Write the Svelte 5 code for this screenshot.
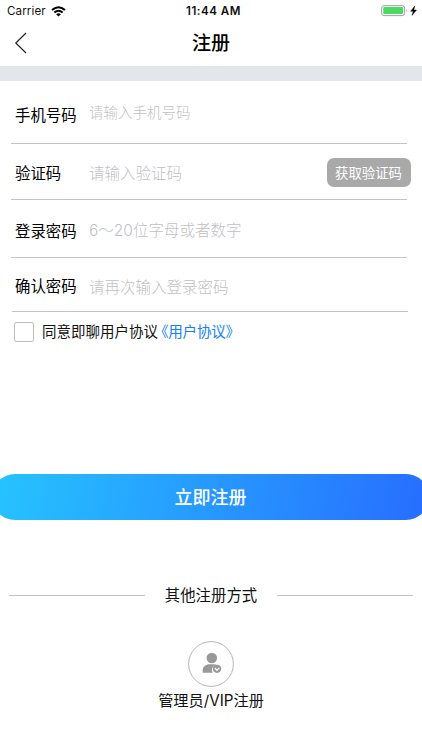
<script>
  const fields = [
    { id: "phone", label: "手机号码", placeholder: "请输入手机号码", type: "tel" },
    { id: "code", label: "验证码", placeholder: "请输入验证码", type: "text" },
    { id: "password", label: "登录密码", placeholder: "6～20位字母或者数字", type: "password" },
    { id: "confirm", label: "确认密码", placeholder: "请再次输入登录密码", type: "password" }
  ];

  let agreed = false;
</script>

<style>
  :global(body) {
    background-color: #fff;
    overflow: hidden;
  }

  .page {
    width: 422px;
    height: 750px;
    overflow: hidden;
    box-sizing: border-box;
    font-family: Inter, "Noto Sans CJK SC", sans-serif;
    color: #111;
  }

  .page * {
    box-sizing: border-box;
  }

  button,
  input {
    font-family: inherit;
    border: 0;
    padding: 0;
    margin: 0;
    background-color: transparent;
  }

  svg {
    display: block;
  }

  .status {
    display: grid;
    grid-template-columns: 1fr auto 1fr;
    align-items: center;
    height: 22px;
    padding: 0 4px 0 7px;
    font-size: 11.6px;
    line-height: 22px;
  }

  .carrier {
    display: flex;
    align-items: center;
    gap: 5px;
    letter-spacing: 0.1px;
  }

  .time {
    font-size: 11.6px;
    font-weight: 600;
    letter-spacing: 0.5px;
    padding-left: 2px;
  }

  .battery {
    justify-self: end;
  }

  .nav {
    display: grid;
    grid-template-columns: 40px 1fr 40px;
    align-items: center;
    height: 44px;
  }

  .back {
    padding: 0 0 2px 14px;
  }

  h1 {
    margin: 0;
    text-align: center;
    font-size: 19px;
    line-height: 40px;
    font-weight: 500;
    color: #000;
  }

  .band {
    height: 15px;
    background-color: #e3e6eb;
  }

  .row {
    display: flex;
    align-items: center;
    margin: 0 15px 0 11px;
    padding-left: 4px;
    border-bottom: 1px solid #c4c4c6;
  }

  .row label {
    width: 74px;
    padding-top: 1px;
    font-size: 15.4px;
    line-height: 22px;
    color: #000;
  }

  .row input {
    flex: 1;
    min-width: 0;
    height: 24px;
    font-size: 15.5px;
    outline: none;
  }

  .row input::placeholder {
    color: #bfbfc5;
    opacity: 1;
    font-weight: 300;
  }

  .phone {
    height: 63px;
    padding-top: 6px;
  }

  .phone input {
    font-size: 14.5px;
    margin-bottom: 5px;
  }

  .code {
    height: 56px;
    padding-top: 3px;
  }

  .password {
    height: 58px;
    padding-top: 5px;
  }

  .password input {
    margin-bottom: 2px;
  }

  .confirm {
    height: 54px;
    margin: 0 14px 0 12px;
    padding-left: 3px;
    padding-top: 3px;
  }

  .confirm input {
    margin-top: 2px;
  }

  .get-code {
    width: 84px;
    height: 29px;
    margin: 0 -4px 1px 0;
    border-radius: 7px;
    background-color: #a9a9a9;
    color: #fff;
    font-size: 13.4px;
    line-height: 28px;
    padding-right: 1px;
  }

  .agree {
    display: flex;
    align-items: center;
    height: 40px;
    padding-left: 14px;
    font-size: 14.5px;
    line-height: 22px;
  }

  .agree input {
    appearance: none;
    width: 20px;
    height: 20px;
    margin-right: 8px;
    border: 1px solid #bdbdbd;
    border-radius: 2px;
  }

  .agree input:checked {
    background-color: #2a7fff;
  }

  .link {
    color: #1481f5;
    font-size: 14.6px;
    letter-spacing: -0.3px;
    margin-left: -4px;
  }

  .submit {
    display: block;
    width: 437px;
    height: 46px;
    margin: 122px 0 0 -8px;
    border-radius: 23px;
    background: linear-gradient(100deg, #26c4ff, #276dff);
    color: #fff;
    font-size: 18px;
    line-height: 46px;
    font-weight: 500;
    padding-top: 1px;
  }

  .divider {
    display: flex;
    align-items: center;
    gap: 20px;
    margin: 61px 9px 0;
    height: 28px;
    font-size: 15.4px;
    line-height: 22px;
  }

  .divider span {
    padding-top: 1px;
  }

  .divider::before,
  .divider::after {
    content: "";
    flex: 1;
    height: 1px;
    background-color: #c4c4c6;
  }

  .vip {
    display: flex;
    flex-direction: column;
    align-items: center;
    width: 422px;
    margin-top: 32px;
    font-size: 15.2px;
    line-height: 22px;
    color: #111;
  }

  .vip span {
    margin-top: 3px;
  }
</style>

<div class="page">
  <div class="status">
    <div class="carrier">
      <span>Carrier</span>
      <svg width="15" height="11" viewBox="0 0 15 11" fill="none" stroke="#000" stroke-width="2">
        <path d="M1 4.1Q7.5-1.7 14 4.1M3.4 6.6Q7.5 3 11.6 6.6" />
        <path d="M5.1 8.2Q7.5 6.1 9.9 8.2L7.5 10.6Z" fill="#000" stroke="none" />
      </svg>
    </div>
    <div class="time">11:44 AM</div>
    <svg class="battery" width="37" height="14" viewBox="0 0 37 14">
      <rect x="0.6" y="1.6" width="23" height="10" rx="2.5" fill="#fff" stroke="#a3a3a3" />
      <rect x="2.2" y="3.1" width="19.8" height="7" rx="1" fill="#4cd964" />
      <path d="M25 4.8Q26.5 6.6 25 8.4Z" fill="#a3a3a3" />
      <path d="M33.8 2L29.6 7.3H32.2L31 11.5L35.5 6H32.8Z" fill="#000" stroke="#000" stroke-width="0.4" />
    </svg>
  </div>

  <div class="nav">
    <button class="back" aria-label="返回">
      <svg width="14" height="22" viewBox="0 0 14 22" fill="none" stroke="#222" stroke-width="1.2">
        <path d="M12 1L1.8 11L12 21" />
      </svg>
    </button>
    <h1>注册</h1>
  </div>
  <div class="band"></div>

  <form on:submit|preventDefault>
    {#each fields as field}
      <div class="row {field.id}">
        <label for={field.id}>{field.label}</label>
        <input id={field.id} type={field.type} placeholder={field.placeholder} />
        {#if field.id === "code"}
          <button type="button" class="get-code">获取验证码</button>
        {/if}
      </div>
    {/each}

    <div class="agree">
      <input id="agree" type="checkbox" bind:checked={agreed} />
      <label for="agree">同意即聊用户协议</label>
      <span class="link">《用户协议》</span>
    </div>

    <button type="submit" class="submit">立即注册</button>
  </form>

  <div class="divider"><span>其他注册方式</span></div>

  <button class="vip">
    <svg width="46" height="46" viewBox="0 0 46 46">
      <circle cx="23" cy="23" r="22.4" fill="#fff" stroke="#b5b5b5" />
      <circle cx="23.8" cy="17" r="5.3" fill="#999" />
      <path d="M14.7 31.7V29.5C14.7 25.6 17.8 23.3 21.5 23.3H25.5Q27.5 23.3 28.6 23.8C24.6 24.6 22.8 28.5 24.8 31.7Z" fill="#999" />
      <circle cx="29" cy="27.8" r="4.1" fill="#999" />
      <path d="M26.9 27L29 29.3L31.2 26.8" fill="none" stroke="#fff" stroke-width="1.2" />
    </svg>
    <span>管理员/VIP注册</span>
  </button>
</div>
